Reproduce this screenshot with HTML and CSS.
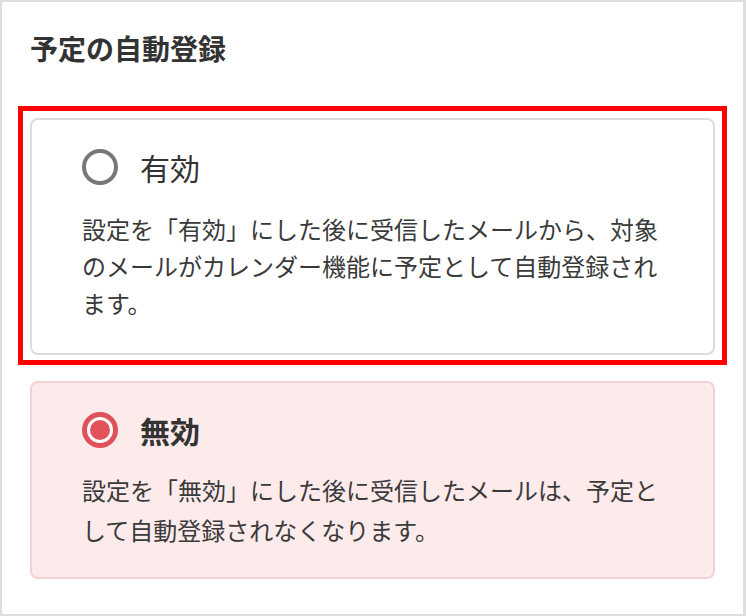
FILE: index.html
```html
<!DOCTYPE html>
<html lang="ja">
<head>
<meta charset="utf-8">
<title>予定の自動登録</title>
<link rel="stylesheet" href="styles.css">
</head>
<body>
<div class="panel">
  <h2 class="title">予定の自動登録</h2>
  <div class="highlight">
    <div class="option option--plain">
      <div class="option-head">
        <span class="radio"></span>
        <span class="option-label">有効</span>
      </div>
      <p class="option-desc">設定を「有効」にした後に受信したメールから、対象のメールがカレンダー機能に予定として自動登録されます。</p>
    </div>
  </div>
  <div class="option option--selected">
    <div class="option-head">
      <span class="radio radio--checked"></span>
      <span class="option-label option-label--bold">無効</span>
    </div>
    <p class="option-desc">設定を「無効」にした後に受信したメールは、予定として自動登録されなくなります。</p>
  </div>
</div>
</body>
</html>
```

FILE: styles.css
```css
html, body {
  margin: 0;
  padding: 0;
  background: #ffffff;
}

body {
  font-family: "Noto Sans CJK JP", "Noto Sans", sans-serif;
  color: #333333;
}

.panel {
  box-sizing: border-box;
  width: 746px;
  height: 616px;
  border: 2px solid #dedede;
  border-right-width: 3px;
  padding: 26px 28px 0 28px;
  background: #ffffff;
}

.title {
  margin: 0;
  font-size: 28px;
  line-height: 40px;
  font-weight: 700;
  color: #333333;
}

.highlight {
  margin: 38px -12px 0 -12px;
  border: 5px solid #ff0000;
  padding: 7px 7px 5px 7px;
}

.option {
  border: 2px solid #dcdcdc;
  border-radius: 8px;
  background: #ffffff;
}

.option--plain {
  padding: 29px 50px 32px 50px;
}

.option--plain .option-desc {
  margin-top: 25px;
  line-height: 37px;
}

.option--selected {
  margin-top: 16px;
  padding: 29px 50px 27px 50px;
  background: #fdeaeb;
  border-color: #f3d0d3;
}

.option--selected .option-desc {
  margin-top: 22px;
  line-height: 40px;
}

.option-head {
  display: flex;
  align-items: center;
  gap: 22px;
  height: 36px;
}

.radio {
  box-sizing: border-box;
  width: 36px;
  height: 36px;
  border-radius: 50%;
  border: 4px solid #777777;
  background: #ffffff;
  flex: none;
  display: flex;
  align-items: center;
  justify-content: center;
}

.radio--checked {
  border: 5px solid #e0525a;
}

.radio--checked::after {
  content: "";
  width: 20px;
  height: 20px;
  border-radius: 50%;
  background: #e2525a;
}

.option-label {
  font-size: 30px;
  line-height: 36px;
  font-weight: 400;
  color: #333333;
}

.option-label--bold {
  font-weight: 700;
}

.option-desc {
  margin: 0;
  font-size: 24px;
  color: #3a3a3a;
}
```
